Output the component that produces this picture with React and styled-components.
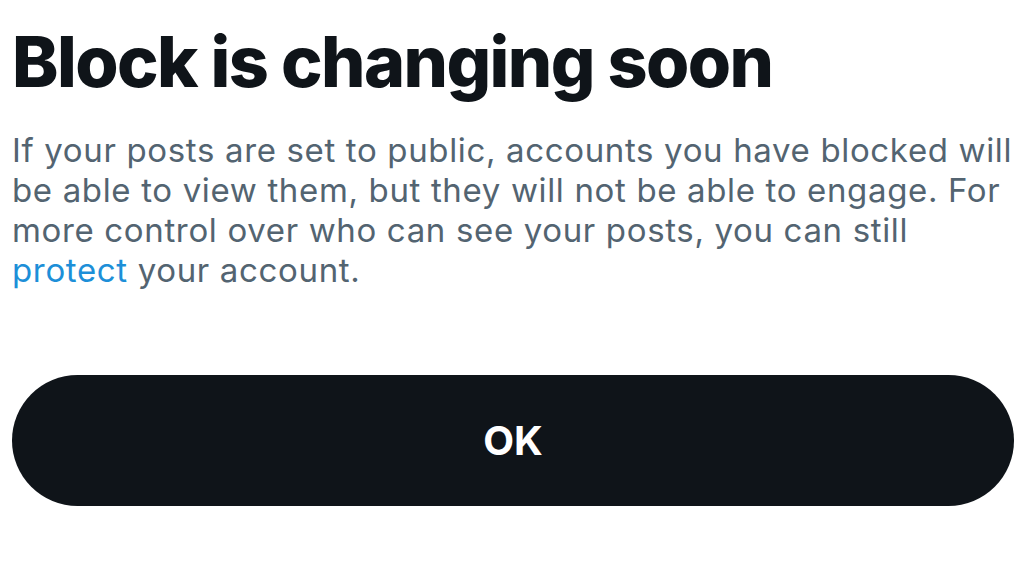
import React from "react";
import styled, { createGlobalStyle } from "styled-components";

const Global = createGlobalStyle`
  html, body { margin: 0; padding: 0; background: #ffffff; }
  body { width: 1024px; height: 575px; overflow: hidden; }
`;

const Sheet = styled.div`
  box-sizing: border-box;
  width: 1024px;
  height: 575px;
  padding: 22px 11px 0 12px;
  display: flex;
  flex-direction: column;
  font-family: Inter, "Noto Sans", sans-serif;
`;

const Title = styled.h1`
  margin: 0;
  font-size: 70px;
  line-height: 80px;
  font-weight: 800;
  letter-spacing: -1.6px;
  color: #0f1419;
`;

const Body = styled.p`
  margin: 28px 0 0 0;
  font-size: 33px;
  line-height: 40px;
  font-weight: 400;
  letter-spacing: 0.65px;
  color: #536471;
  white-space: nowrap;
`;

const Link = styled.span`
  color: #1d8fd8;
`;

const OkButton = styled.button`
  margin-top: 85px;
  width: 1002px;
  height: 131px;
  border: none;
  border-radius: 66px;
  background: #0f1419;
  color: #ffffff;
  font-family: Inter, "Noto Sans", sans-serif;
  font-size: 40px;
  font-weight: 700;
  display: flex;
  align-items: center;
  justify-content: center;
  cursor: pointer;
`;

export default function App() {
  return (
    <>
      <Global />
      <Sheet>
        <Title>Block is changing soon</Title>
        <Body>
          If your posts are set to public, accounts you have blocked will
          <br />
          be able to view them, but they will not be able to engage. For
          <br />
          more control over who can see your posts, you can still
          <br />
          <Link>protect</Link> your account.
        </Body>
        <OkButton>OK</OkButton>
      </Sheet>
    </>
  );
}
